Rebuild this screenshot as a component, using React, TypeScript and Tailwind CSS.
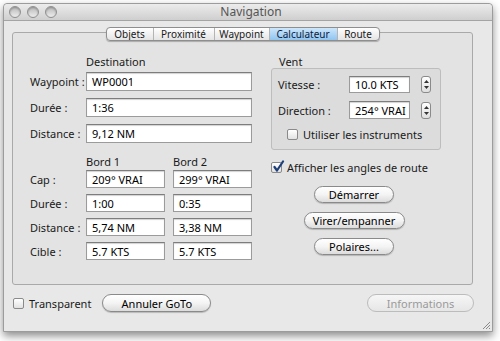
import React from "react";

const field =
  "h-[19px] bg-white border border-[#9b9b9b] border-t-[#7d7d7d] shadow-[inset_0_1px_1px_rgba(0,0,0,0.18)] pl-[5px] flex items-center text-black whitespace-nowrap overflow-hidden";

const pill =
  "flex items-center justify-center rounded-full border border-[#8a8a8a] bg-gradient-to-b from-white via-[#f4f4f4] to-[#dcdcdc] shadow-[0_1px_1px_rgba(0,0,0,0.2)] text-black whitespace-nowrap";

function Light() {
  return (
    <div className="w-[12px] h-[12px] rounded-full border border-[#8f8f8f] bg-gradient-to-b from-[#b9b9b9] to-[#eeeeee] shadow-[inset_0_1px_2px_rgba(0,0,0,0.25)]" />
  );
}

function Field({ value, className = "" }: { value: string; className?: string }) {
  return <div className={`${field} ${className}`}>{value}</div>;
}

function Check({ checked = false }: { checked?: boolean }) {
  return (
    <div className="relative w-[11px] h-[11px] rounded-[2px] border border-[#8a8a8a] bg-gradient-to-b from-white to-[#e2e2e2] shrink-0">
      {checked && (
        <svg className="absolute -top-[3px] left-0" width="13" height="13" viewBox="0 0 13 13">
          <path d="M2.5 7 L5 10.5 L11 1.5" fill="none" stroke="#1d3f7a" strokeWidth="2.2" strokeLinecap="round" strokeLinejoin="round" />
        </svg>
      )}
    </div>
  );
}

function Stepper() {
  return (
    <div className="w-[10px] h-[17px] rounded-[3px] border border-[#8a8a8a] bg-gradient-to-b from-white to-[#dedede] flex flex-col items-center justify-center gap-[3px]">
      <svg width="5" height="3" viewBox="0 0 5 3"><path d="M0 3 L2.5 0 L5 3 Z" fill="#333" /></svg>
      <svg width="5" height="3" viewBox="0 0 5 3"><path d="M0 0 L2.5 3 L5 0 Z" fill="#333" /></svg>
    </div>
  );
}

const tabs = ["Objets", "Proximité", "Waypoint", "Calculateur", "Route"];
const tabW = ["w-[46px]", "w-[61px]", "w-[55px]", "w-[68px]", "w-[42px]"];

export default function App() {
  return (
    <div className="w-[500px] h-[341px] bg-white font-['Lucida_Grande','Noto_Sans',sans-serif] text-[11px] leading-none text-[#1a1a1a] overflow-hidden">
      <div className="relative ml-[3px] mt-[3px] w-[490px] h-[329px] border border-[#9c9c9c] rounded-t-[4px] bg-[#e8e8e8] shadow-[0_4px_8px_rgba(0,0,0,0.45)] flex flex-col">
        {/* title bar */}
        <div className="h-[17px] flex items-center px-[5px] rounded-t-[4px] bg-gradient-to-b from-[#ececec] to-[#cfcfcf] border-b border-[#a4a4a4]">
          <div className="flex gap-[6px] w-[60px]">
            <Light />
            <Light />
            <Light />
          </div>
          <div className="flex-1 text-center text-[12px] text-[#555] pl-[6px]">Navigation</div>
          <div className="w-[60px]" />
        </div>

        {/* body */}
        <div className="flex-1 flex flex-col pl-[8px] pr-[19px] pt-[6px]">
          <div className="flex justify-center relative z-10">
            <div className="flex h-[14px] rounded-[4px] border border-[#8e8e8e] bg-gradient-to-b from-white to-[#e4e4e4] shadow-[0_1px_1px_rgba(0,0,0,0.25)] overflow-hidden text-[10px]">
              {tabs.map((t, i) => (
                <div
                  key={t}
                  className={`${tabW[i]} flex items-center justify-center ${i > 0 ? "border-l border-[#b4b4b4]" : ""} ${
                    t === "Calculateur" ? "bg-gradient-to-b from-[#cde6fb] to-[#8fc5f0] text-[#0c2040]" : ""
                  }`}
                >
                  {t}
                </div>
              ))}
            </div>
          </div>

          <div className="-mt-[9px] h-[253px] border border-[#a9a9a9] rounded-[3px] bg-[#e3e3e3] flex pt-[21px] pl-[17px]">
            {/* left column */}
            <div className="w-[222px] flex flex-col">
              <div className="h-[14px] pl-[56px] flex items-center">Destination</div>
              <div className="mt-[4px] flex flex-col gap-[7px]">
                {[
                  ["Waypoint :", "WP0001"],
                  ["Durée :", "1:36"],
                  ["Distance :", "9,12 NM"],
                ].map(([l, v]) => (
                  <div key={l} className="flex items-center">
                    <div className="w-[56px] whitespace-nowrap">{l}</div>
                    <Field value={v} className="w-[166px]" />
                  </div>
                ))}
              </div>

              <div className="mt-[11px] h-[14px] flex items-center pl-[56px]">
                <div className="w-[87px]">Bord 1</div>
                <div>Bord 2</div>
              </div>
              <div className="mt-[2px] flex flex-col gap-[6px]">
                {[
                  ["Cap :", "209° VRAI", "299° VRAI"],
                  ["Durée :", "1:00", "0:35"],
                  ["Distance :", "5,74 NM", "3,38 NM"],
                  ["Cible :", "5.7 KTS", "5.7 KTS"],
                ].map(([l, a, b]) => (
                  <div key={l} className="flex items-center">
                    <div className="w-[56px] whitespace-nowrap">{l}</div>
                    <Field value={a} className="w-[79px] !h-[18px]" />
                    <Field value={b} className="w-[79px] ml-[8px] !h-[18px]" />
                  </div>
                ))}
              </div>
            </div>

            {/* right column */}
            <div className="ml-[19px] w-[170px] flex flex-col">
              <div className="h-[14px] pl-[8px] flex items-center">Vent</div>
              <div className="h-[82px] border border-[#bdbdbd] rounded-[3px] bg-[#dcdcdc] pt-[7px] pl-[6px] flex flex-col">
                <div className="flex items-center">
                  <div className="w-[71px]">Vitesse :</div>
                  <Field value="10.0 KTS" className="w-[61px] !h-[17px]" />
                  <div className="ml-[11px]"><Stepper /></div>
                </div>
                <div className="mt-[8px] flex items-center">
                  <div className="w-[71px]">Direction :</div>
                  <Field value="254° VRAI" className="w-[61px] !h-[18px]" />
                  <div className="ml-[11px]"><Stepper /></div>
                </div>
                <div className="mt-[10px] pl-[9px] flex items-center gap-[5px]">
                  <Check />
                  <span>Utiliser les instruments</span>
                </div>
              </div>
              <div className="mt-[12px] flex items-center gap-[5px]">
                <Check checked />
                <span>Afficher les angles de route</span>
              </div>
              <div className="mt-[13px] flex flex-col items-center gap-[9px] pr-[4px]">
                <div className={`${pill} w-[80px] h-[17px]`}>Démarrer</div>
                <div className={`${pill} w-[101px] h-[17px]`}>Virer/empanner</div>
                <div className={`${pill} w-[80px] h-[17px]`}>Polaires...</div>
              </div>
            </div>
          </div>

          {/* bottom row */}
          <div className="mt-[9px] flex items-center h-[18px]">
            <div className="pl-[1px] flex items-center gap-[5px]">
              <Check />
              <span>Transparent</span>
            </div>
            <div className={`${pill} ml-[11px] w-[109px] h-[18px]`}>Annuler GoTo</div>
            <div className="flex-1" />
            <div className="w-[107px] h-[18px] -mr-[1px] flex items-center justify-center rounded-full border border-[#bcbcbc] bg-gradient-to-b from-[#f6f6f6] to-[#e6e6e6] text-[#9a9a9a]">
              Informations
            </div>
          </div>
        </div>

        <svg className="absolute right-[1px] bottom-[1px]" width="10" height="10" viewBox="0 0 10 10">
          <path d="M9 2 L2 9 M9 5 L5 9 M9 8 L8 9" stroke="#8a8a8a" strokeWidth="1" />
        </svg>
      </div>
    </div>
  );
}
